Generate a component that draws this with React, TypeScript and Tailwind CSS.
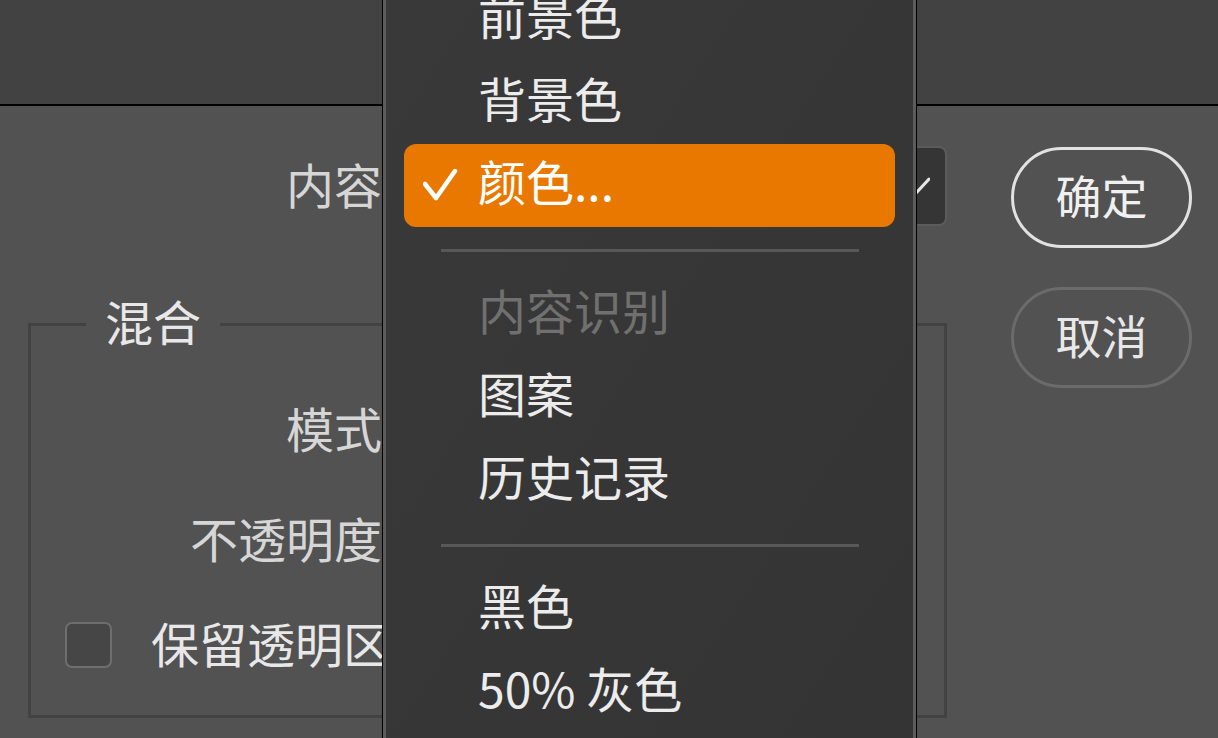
import React from "react";

const font = "font-['Noto_Sans_CJK_SC','Noto_Sans',sans-serif]";

type Item = { label: string; checked?: boolean; disabled?: boolean } | "sep";

const items: Item[] = [
  { label: "前景色" },
  { label: "背景色" },
  { label: "颜色...", checked: true },
  "sep",
  { label: "内容识别", disabled: true },
  { label: "图案" },
  { label: "历史记录" },
  "sep",
  { label: "黑色" },
  { label: "50% 灰色" },
];

function Check() {
  return (
    <svg width="36" height="36" viewBox="0 0 36 36" className="shrink-0">
      <polyline
        points="2,16 13,30 32,3"
        fill="none"
        stroke="#ffffff"
        strokeWidth="4.5"
        strokeLinecap="round"
        strokeLinejoin="round"
      />
    </svg>
  );
}

function Menu() {
  return (
    <div className="absolute left-[382px] top-[-40px] w-[535px] h-[800px] bg-black px-[1px]">
      <div className="h-full border-x-[3px] border-[#5c5c5c] bg-gradient-to-br from-[#393939] to-[#343434] pt-[18px]">
        {items.map((it, i) =>
          it === "sep" ? (
            <div key={i} className="h-[46px] flex items-center">
              <div className="ml-[55px] w-[418px] h-[3px] bg-[#585858]" />
            </div>
          ) : (
            <div
              key={i}
              className={
                "mx-[18px] h-[83px] flex items-center rounded-[12px] " +
                (it.checked ? "bg-[#e87800] pl-[19px]" : "pl-[74px]")
              }
            >
              {it.checked && <Check />}
              <span
                className={
                  "text-[48px] leading-none pb-[12px] " +
                  (it.checked ? "ml-[19px] text-white" : it.disabled ? "text-[#707070]" : "text-[#ececec]")
                }
              >
                {it.label}
              </span>
            </div>
          )
        )}
      </div>
    </div>
  );
}

function Label({ children }: { children: React.ReactNode }) {
  return <span className="inline-block pb-[6px] text-[48px] leading-none text-[#d6d6d6]">{children}</span>;
}

export default function App() {
  return (
    <div className={`relative w-[1218px] h-[738px] overflow-hidden bg-[#525252] ${font}`}>
      {/* title bar */}
      <div className="h-[106px] bg-[#424242] border-b-2 border-black" />

      {/* body */}
      <div className="flex">
        <div className="pl-[28px] w-[947px] shrink-0">
          {/* 内容 row */}
          <div className="mt-[40px] flex items-center h-[80px]">
            <div className="w-[354px] text-right">
              <Label>内容</Label>
            </div>
            <div className="ml-[10px] flex-1 h-[80px] rounded-[8px] border-2 border-[#5b5b5b] bg-[#353535] flex items-center justify-end pr-[15px]">
              <svg width="26" height="18" viewBox="0 0 26 18">
                <polyline points="1,2 13,15 25,2" fill="none" stroke="#e6e6e6" strokeWidth="3" strokeLinecap="round" />
              </svg>
            </div>
          </div>

          {/* 混合 group */}
          <fieldset className="mt-[74px] border-[3px] border-[#424242] pb-[30px]">
            <legend className="ml-[55px] px-[19px] h-[48px] text-[48px] leading-none text-[#e8e8e8]">
              <span className="inline-block -translate-y-[4px]">混合</span>
            </legend>
            <div className="pt-[42px] flex items-center h-[122px]">
              <div className="w-[351px] text-right">
                <Label>模式</Label>
              </div>
            </div>
            <div className="mt-[30px] flex items-center h-[80px]">
              <div className="w-[351px] text-right">
                <Label>不透明度</Label>
              </div>
            </div>
            <div className="mt-[25px] flex items-center h-[80px]">
              <div className="ml-[34px] w-[47px] h-[46px] rounded-[7px] border-2 border-[#6e6e6e] bg-[#464646]" />
              <span className="ml-[39px] pb-[6px] text-[48px] leading-none text-[#e8e8e8]">保留透明区域</span>
            </div>
          </fieldset>
        </div>

        {/* buttons */}
        <div className="ml-[64px] pt-[41px] flex flex-col gap-[39px]">
          <div className="w-[181px] h-[101px] rounded-full border-[3px] border-[#e2e2e2] flex items-center justify-center pb-[8px]">
            <span className="text-[46px] leading-none text-[#f0f0f0]">确定</span>
          </div>
          <div className="w-[181px] h-[101px] rounded-full border-[3px] border-[#6b6b6b] flex items-center justify-center pb-[8px]">
            <span className="text-[46px] leading-none text-[#e8e8e8]">取消</span>
          </div>
        </div>
      </div>

      <Menu />
    </div>
  );
}
